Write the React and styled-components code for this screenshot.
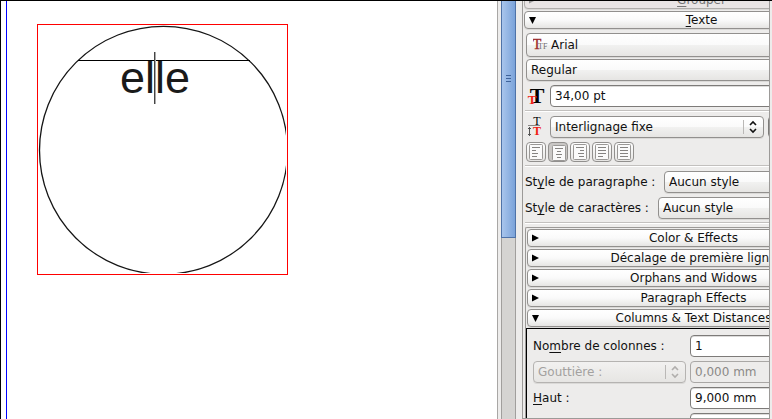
import { useState } from "react";
import styled, { createGlobalStyle } from "styled-components";

const GlobalStyle = createGlobalStyle`
  * {
    box-sizing: border-box;
  }

  body {
    margin: 0;
    overflow: hidden;
    background: #edeceb;
    color: #111;
    font-family: "DejaVu Sans", sans-serif;
    font-size: 12px;
    line-height: 16px;
  }

  button, input, select {
    margin: 0;
    font: inherit;
    color: inherit;
  }
`;

// Window
const Window = styled.div`
  display: flex;
  height: 100vh;
  overflow: hidden;
  border-top: 1px solid #000;
`;

const Canvas = styled.main`
  flex: 1;
  min-width: 0;
  padding-left: 5px;
  background: #fff;
  border-left: 1px solid #000;
`;

const Page = styled.div`
  height: 100%;
  padding: 23px 0 0 30px;
  border-left: 1px solid #0000ff;
`;

const Frame = styled.div`
  width: 251px;
  height: 251px;
  border: 1px solid #ff0000;

  svg {
    display: block;
  }
`;

// Scrollbar
const Scrollbar = styled.div`
  flex: none;
  width: 25px;
  padding: 0 6px 0 3px;
  border-left: 1px solid #a9a7a5;
`;

const Trough = styled.div`
  height: 100%;
  background: #d5d4d2;
  border: solid #a19f9d;
  border-width: 0 1px;
`;

const Thumb = styled.div`
  display: flex;
  flex-direction: column;
  align-items: center;
  height: 237px;
  margin: 0 -1px;
  padding-top: 74px;
  gap: 2px;
  background: linear-gradient(to right, #a8c5ec, #7ba3da);
  border: solid #4f73a8;
  border-width: 0 1px 1px;
`;

const Grip = styled.span`
  width: 5px;
  height: 1px;
  background: #3f639a;
`;

// Properties panel
const Panel = styled.aside`
  flex: none;
  width: 248px;
  margin-right: 2px;
  padding-left: 1px;
  overflow: hidden;
  border: solid #9c9a98;
  border-width: 0 1px 1px;
`;

const Content = styled.div`
  width: 358px;
  margin-top: -10px;
`;

const SectionButton = styled.button`
  display: flex;
  align-items: center;
  width: 100%;
  height: 18px;
  margin-bottom: 2px;
  padding: 0 14px 0 4px;
  background: linear-gradient(#fff, #fafafa 50%, #e6e5e3);
  border: 1px solid #92908e;
  border-radius: 4px;
  box-shadow: 0 1px 0 #dad9d7;

  svg {
    flex: none;
  }

  ${({ $faded }) =>
    $faded &&
    `
    color: #777;
    background: #e9e5e5;
    border-color: #b0aeac;
  `}
`;

const SectionTitle = styled.span`
  flex: 1;
  text-align: center;
  white-space: nowrap;
`;

const Key = styled.u`
  text-underline-offset: 2px;
  text-decoration-skip-ink: none;
`;

const Body = styled.div`
  padding: 2px 0 0 1px;
`;

const Row = styled.div`
  display: flex;
  align-items: center;
  gap: 4px;
  margin-bottom: ${({ $gap }) => $gap || 4}px;
  padding-left: ${({ $indent }) => $indent || 0}px;
`;

const Divider = styled.hr`
  height: 2px;
  margin: 0 0 ${({ $gap }) => $gap || 4}px;
  border: solid #c2c0be;
  border-width: 1px 0 0;
  background: #fff;
`;

const IconLabel = styled.span`
  flex: none;
  width: 20px;
  height: 20px;

  svg {
    display: block;
  }
`;

const Label = styled.label`
  flex: none;
  width: ${({ $width }) => $width}px;
  white-space: nowrap;
`;

const Field = styled.input`
  flex: 1;
  min-width: 0;
  height: 22px;
  padding: 0 4px;
  background: #fff;
  border: 1px solid #7d7b79;
  border-radius: 4px;
  box-shadow: inset 0 1px 0 #dcdbda;

  &:disabled {
    color: #8b8987;
    background: #edeceb;
    border-color: #a9a7a5;
    box-shadow: none;
  }
`;

const ComboBox = styled.div`
  position: relative;
  flex: ${({ $width }) => ($width ? "none" : 1)};
  width: ${({ $width }) => ($width ? `${$width}px` : "auto")};

  > svg {
    position: absolute;
    top: 3px;
    right: 3px;
    pointer-events: none;
    color: ${({ $disabled }) => ($disabled ? "#b0aeac" : "#111")};
  }
`;

const FontIcon = styled.span`
  position: absolute;
  top: 5px;
  left: 7px;
  pointer-events: none;

  svg {
    display: block;
  }
`;

const Select = styled.select`
  display: block;
  width: 100%;
  height: ${({ $tall }) => ($tall ? 24 : 22)}px;
  padding: 0 24px 0 ${({ $withIcon }) => ($withIcon ? 24 : 4)}px;
  appearance: none;
  background: linear-gradient(#fff, #fafafa 50%, #f1f1f0 52%, #e6e5e3);
  border: 1px solid #92908e;
  border-radius: 4px;
  box-shadow: 0 1px 0 #dad9d7;

  &:disabled {
    color: #a3a19f;
    opacity: 1;
    background: linear-gradient(#f2f1f0, #e6e5e3);
    border-color: #b5b3b1;
  }
`;

const Toolbar = styled.div`
  display: flex;
  gap: 2px;
  margin-bottom: 3px;
  padding-left: 1px;
`;

const AlignButton = styled.button`
  width: 20px;
  height: 20px;
  padding: ${({ $active }) => ($active ? "2px 1px 0 3px" : "1px 2px")};
  background: ${({ $active }) => ($active ? "#c9c7c5" : "linear-gradient(#fff, #e6e5e3)")};
  border: 1px solid #92908e;
  border-radius: 4px;

  svg {
    display: block;
  }
`;

const Group = styled.div`
  width: 338px;
  padding: 1px 0 0 1px;
  border: solid #9c9a98;
  border-width: 1px 0 0 1px;
  border-radius: 2px 0 0 0;
`;

const GroupBody = styled.div`
  margin: -1px 0 0 -1px;
  padding: 6px 0 0 6px;
  border: solid #000;
  border-width: 1px 0 0 1px;
`;

function Triangle({ open, color = "#000" }) {
  return (
    <svg width="7" height="8" viewBox="0 0 7 8" aria-hidden="true">
      <path d={open ? "M0 1h7L3.5 8z" : "M0 0.5v7L7 4z"} fill={color} />
    </svg>
  );
}

function Section({ open, faded, children }) {
  return (
    <SectionButton type="button" aria-expanded={!!open} $faded={faded}>
      <Triangle open={open} color={faded ? "#999" : "#000"} />
      <SectionTitle>{children}</SectionTitle>
    </SectionButton>
  );
}

function Combo({ id, value, label, icon, width, tall, disabled }) {
  return (
    <ComboBox $width={width} $disabled={disabled}>
      {icon && <FontIcon>{icon}</FontIcon>}
      <Select id={id} aria-label={label} defaultValue={value} disabled={disabled} $withIcon={!!icon} $tall={tall}>
        <option>{value}</option>
      </Select>
      <svg width="18" height="16" viewBox="0 0 18 16" aria-hidden="true">
        <path d="M0.5 1v14" stroke="#bab8b6" />
        <path d="M7 6l3-3 3 3M7 10l3 3 3-3" fill="none" stroke="currentColor" strokeWidth="1.6" />
      </svg>
    </ComboBox>
  );
}

const FontTypeIcon = () => (
  <svg width="15" height="14" viewBox="0 0 15 14" aria-hidden="true" fontFamily="Liberation Serif, serif">
    <text x="4" y="11" textAnchor="middle" fontSize="14" fill="#9c2a2a" stroke="#9c2a2a" strokeWidth="0.4">T</text>
    <text x="5" y="11" fontSize="8" fill="#6f6b69">TF</text>
  </svg>
);

const FontSizeIcon = () => (
  <svg width="20" height="20" viewBox="0 0 20 20" aria-hidden="true" fontFamily="Liberation Serif, serif">
    <text x="11" y="17" textAnchor="middle" fontSize="22" fontWeight="bold" fill="#000">T</text>
    <text x="6" y="18" textAnchor="middle" fontSize="13" fontWeight="bold" fill="#f02010">T</text>
  </svg>
);

const LineSpacingIcon = () => (
  <svg width="20" height="20" viewBox="0 0 20 20" aria-hidden="true" fontFamily="Liberation Serif, serif">
    <text x="11" y="8" textAnchor="middle" fontSize="12" fill="#000">T</text>
    <path d="M2 8.5h12" stroke="#8a8886" />
    <text x="11" y="18" textAnchor="middle" fontSize="12" fontWeight="bold" fill="#f02010">T</text>
    <path d="M3.5 10v9M2 12l1.5-1.5L5 12M2 17l1.5 1.5L5 17" fill="none" stroke="#555" />
  </svg>
);

const ALIGNMENTS = [
  { name: "Gauche", lines: [[3, 8], [3, 4], [3, 6], [3, 5]] },
  { name: "Centre", lines: [[3, 8], [5, 4], [4, 6], [5, 4]] },
  { name: "Droite", lines: [[3, 8], [7, 4], [5, 6], [6, 5]] },
  { name: "Justifié", lines: [[3, 8], [3, 8], [3, 8], [3, 5]] },
  { name: "Forcé", lines: [[3, 8], [3, 8], [3, 8], [3, 8]] },
];

const AlignIcon = ({ lines }) => (
  <svg width="14" height="16" viewBox="0 0 14 16" aria-hidden="true">
    <rect x="0.5" y="0.5" width="13" height="15" rx="1" fill="#fafafa" stroke="#9a9896" />
    {lines.map(([x, w], i) => (
      <rect key={i} x={x} y={3 + i * 3} width={w} height="1" fill="#858381" />
    ))}
  </svg>
);

const TextFrame = () => (
  <Frame>
    <svg width="249" height="249" viewBox="38 25 249 249">
      <clipPath id="frame">
        <rect x="38" y="25" width="248" height="248" />
      </clipPath>
      <circle cx="163.5" cy="150.3" r="124" fill="none" stroke="#151515" strokeWidth="1.3" clipPath="url(#frame)" />
      <text x="120" y="93" fontFamily="Liberation Sans, Arial, sans-serif" fontSize="45" fill="#1a1a1a">
        elle
      </text>
      <path d="M78 60.5h172" stroke="#000" />
      <path d="M154.5 52v52" stroke="#444" />
      <path d="M155.5 52v52" stroke="#aaa" />
    </svg>
  </Frame>
);

const App = () => {
  const [align, setAlign] = useState("Centre");

  return (
    <>
      <GlobalStyle />
      <Window>
        <Canvas>
          <Page>
            <TextFrame />
          </Page>
        </Canvas>
        <Scrollbar>
          <Trough>
            <Thumb>
              <Grip />
              <Grip />
              <Grip />
            </Thumb>
          </Trough>
        </Scrollbar>
        <Panel>
          <Content>
            <Section faded>
              <Key>G</Key>rouper
            </Section>
            <Section open>
              <Key>T</Key>exte
            </Section>
            <Body>
              <Row $gap={2} $indent={1}>
                <Combo label="Police" value="Arial" icon={<FontTypeIcon />} tall />
              </Row>
              <Row $indent={1}>
                <Combo label="Style de police" value="Regular" />
              </Row>
              <Row $gap={3} $indent={1}>
                <IconLabel>
                  <FontSizeIcon />
                </IconLabel>
                <Field aria-label="Corps" defaultValue="34,00 pt" />
              </Row>
              <Divider />
              <Row $indent={1}>
                <IconLabel>
                  <LineSpacingIcon />
                </IconLabel>
                <Combo label="Interlignage" value="Interlignage fixe" width={214} />
                <Field aria-label="Valeur" />
              </Row>
              <Toolbar>
                {ALIGNMENTS.map(({ name, lines }) => (
                  <AlignButton
                    key={name}
                    type="button"
                    aria-label={name}
                    aria-pressed={align === name}
                    $active={align === name}
                    onClick={() => setAlign(name)}
                  >
                    <AlignIcon lines={lines} />
                  </AlignButton>
                ))}
              </Toolbar>
              <Divider />
              <Row>
                <Label htmlFor="paragraph" $width={135}>
                  St<Key>y</Key>le de paragraphe :
                </Label>
                <Combo id="paragraph" value="Aucun style" />
              </Row>
              <Row $gap={3}>
                <Label htmlFor="character" $width={129}>
                  St<Key>y</Key>le de caractères :
                </Label>
                <Combo id="character" value="Aucun style" />
              </Row>
              <Divider $gap={3} />
              <Group>
                <Section>Color &amp; Effects</Section>
                <Section>Décalage de première ligne</Section>
                <Section>Orphans and Widows</Section>
                <Section>Paragraph Effects</Section>
                <Section open>Columns &amp; Text Distances</Section>
                <GroupBody>
                  <Row>
                    <Label htmlFor="columns" $width={153}>
                      No<Key>m</Key>bre de colonnes :
                    </Label>
                    <Field id="columns" defaultValue="1" />
                  </Row>
                  <Row>
                    <Combo label="Gouttière" value="Gouttière :" width={153} disabled />
                    <Field aria-label="Gouttière" defaultValue="0,000 mm" disabled />
                  </Row>
                  <Row>
                    <Label htmlFor="top" $width={153}>
                      <Key>H</Key>aut :
                    </Label>
                    <Field id="top" defaultValue="9,000 mm" />
                  </Row>
                  <Row>
                    <Label htmlFor="bottom" $width={153} />
                    <Field id="bottom" />
                  </Row>
                </GroupBody>
              </Group>
            </Body>
          </Content>
        </Panel>
      </Window>
    </>
  );
};

export default App;
